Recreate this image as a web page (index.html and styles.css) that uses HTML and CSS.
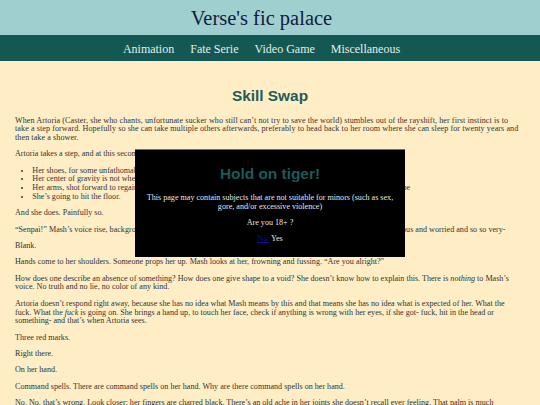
FILE: index.html
```html
<!DOCTYPE html>
<html lang="en">
<head>
<meta charset="utf-8">
<title>Skill Swap - Verse's fic palace</title>
<link rel="stylesheet" href="styles.css">
</head>
<body>
<header class="site-header">
  <div class="brand">
    <h1 class="site-title">Verse's fic palace</h1>
  </div>
  <nav class="site-nav">
    <ul class="nav-list">
      <li><a class="nav-link" href="#animation">Animation</a></li>
      <li><a class="nav-link" href="#fate">Fate Serie</a></li>
      <li><a class="nav-link" href="#games">Video Game</a></li>
      <li><a class="nav-link" href="#misc">Miscellaneous</a></li>
    </ul>
  </nav>
</header>

<main class="story">
  <h2 class="story-title">Skill Swap</h2>
  <p class="story-lead">When Artoria (Caster, she who chants, unfortunate sucker who still can’t not try to save the world) stumbles out of the rayshift, her first instinct is to take a step forward. Hopefully so she can take multiple others afterwards, preferably to head back to her room where she can sleep for twenty years and then take a shower.</p>
  <p>Artoria takes a step, and at this second, several things become very clear to her:</p>
  <ul class="story-list">
    <li>Her shoes, for some unfathomable reason, do not fit anymore.</li>
    <li>Her center of gravity is not where it used to be.</li>
    <li>Her arms, shot forward to regain her balance, are thinner and shorter and not reaching nearly as far as they should be</li>
    <li>She’s going to hit the floor.</li>
  </ul>
  <p>And she does. Painfully so.</p>
  <p>“Senpai!” Mash’s voice rise, background noise swelling and dipping with it, and it sounds so far away, muffled, so anxious and worried and so so very-</p>
  <p>Blank.</p>
  <p>Hands come to her shoulders. Someone props her up. Mash looks at her, frowning and fussing. “Are you alright?”</p>
  <p>How does one describe an absence of something? How does one give shape to a void? She doesn’t know how to explain this. There is <em>nothing</em> to Mash’s voice. No truth and no lie, no color of any kind.</p>
  <p>Artoria doesn’t respond right away, because she has no idea what Mash means by this and that means she has no idea what is expected of her. What the fuck. What the <em>fuck</em> is going on. She brings a hand up, to touch her face, check if anything is wrong with her eyes, if she got- fuck, hit in the head or something- and that’s when Artoria sees.</p>
  <p>Three red marks.</p>
  <p>Right there.</p>
  <p>On her hand.</p>
  <p>Command spells. There are command spells on her hand. Why are there command spells on her hand.</p>
  <p>No. No, that’s wrong. Look closer; her fingers are charred black. There’s an old ache in her joints she doesn’t recall ever feeling. That palm is much narrower than it should be, and the wrist above it is not hers at all.</p>
</main>

<div class="age-gate" role="dialog" aria-labelledby="gate-title">
  <h2 class="gate-title" id="gate-title">Hold on tiger!</h2>
  <p class="gate-text">This page may contain subjects that are not suitable for minors (such as sex, gore, and/or excessive violence)</p>
  <p class="gate-text">Are you 18+ ?</p>
  <p class="gate-text gate-choices"><a class="gate-no" href="#leave">No.</a> <span class="gate-yes">Yes</span></p>
</div>
</body>
</html>
```

FILE: styles.css
```css
html, body {
  margin: 0;
  padding: 0;
}

body {
  background: #ffedc5;
  color: #333;
  font-family: "Liberation Serif", "Times New Roman", serif;
}

/* ---- site header ---- */
.brand {
  background: #9fd0cf;
  height: 35px;
  display: flex;
  align-items: center;
  justify-content: center;
  padding-right: 17px;
}

.site-title {
  margin: 0;
  font-size: 20.5px;
  font-weight: normal;
  line-height: 1;
  color: #121b3b;
  padding-top: 2px;
}

.site-nav {
  background: #135853;
  height: 26px;
  display: flex;
  align-items: center;
  justify-content: center;
  padding-right: 17px;
}

.nav-list {
  display: flex;
  gap: 16px;
  margin: 0;
  padding: 0;
  list-style: none;
}

.nav-link {
  color: #e6ede8;
  font-size: 12px;
  text-decoration: none;
}

/* ---- story ---- */
.story {
  padding: 0 20px 0 15px;
}

.story-title {
  margin: 26px 0 11.5px;
  font-family: "Liberation Sans", Arial, sans-serif;
  font-weight: bold;
  font-size: 15.4px;
  line-height: 18px;
  color: #1d5d59;
  text-align: center;
  padding-left: 5px;
}

.story p {
  margin: 7.7px 0;
  font-size: 8.1px;
  line-height: 8.7px;
}

/* opening paragraph is set a touch looser */
.story .story-lead {
  letter-spacing: 0.08px;
}

.story-list {
  margin: 7.7px 0;
  padding-left: 17.3px;
  font-size: 8.1px;
  line-height: 8.7px;
}

/* ---- age warning dialog ---- */
.age-gate {
  position: fixed;
  inset: 0;
  margin: auto;
  width: 270px;
  height: 108px;
  box-sizing: border-box;
  background: #000;
  border-top: 1px solid #6e6e6e;
  padding: 15px 6px 0;
  text-align: center;
  color: #e6e6e6;
}

.gate-title {
  margin: 0 0 10px;
  font-family: "Liberation Sans", Arial, sans-serif;
  font-weight: bold;
  font-size: 15.4px;
  line-height: 18px;
  color: #1b5b58;
}

.gate-text {
  margin: 7.4px 0 0;
  font-size: 8.1px;
  line-height: 9px;
}

.gate-title + .gate-text {
  margin-top: 10px;
}

.gate-no {
  color: #0c0c9c;
}

.gate-yes {
  color: #e6e6e6;
}
```
